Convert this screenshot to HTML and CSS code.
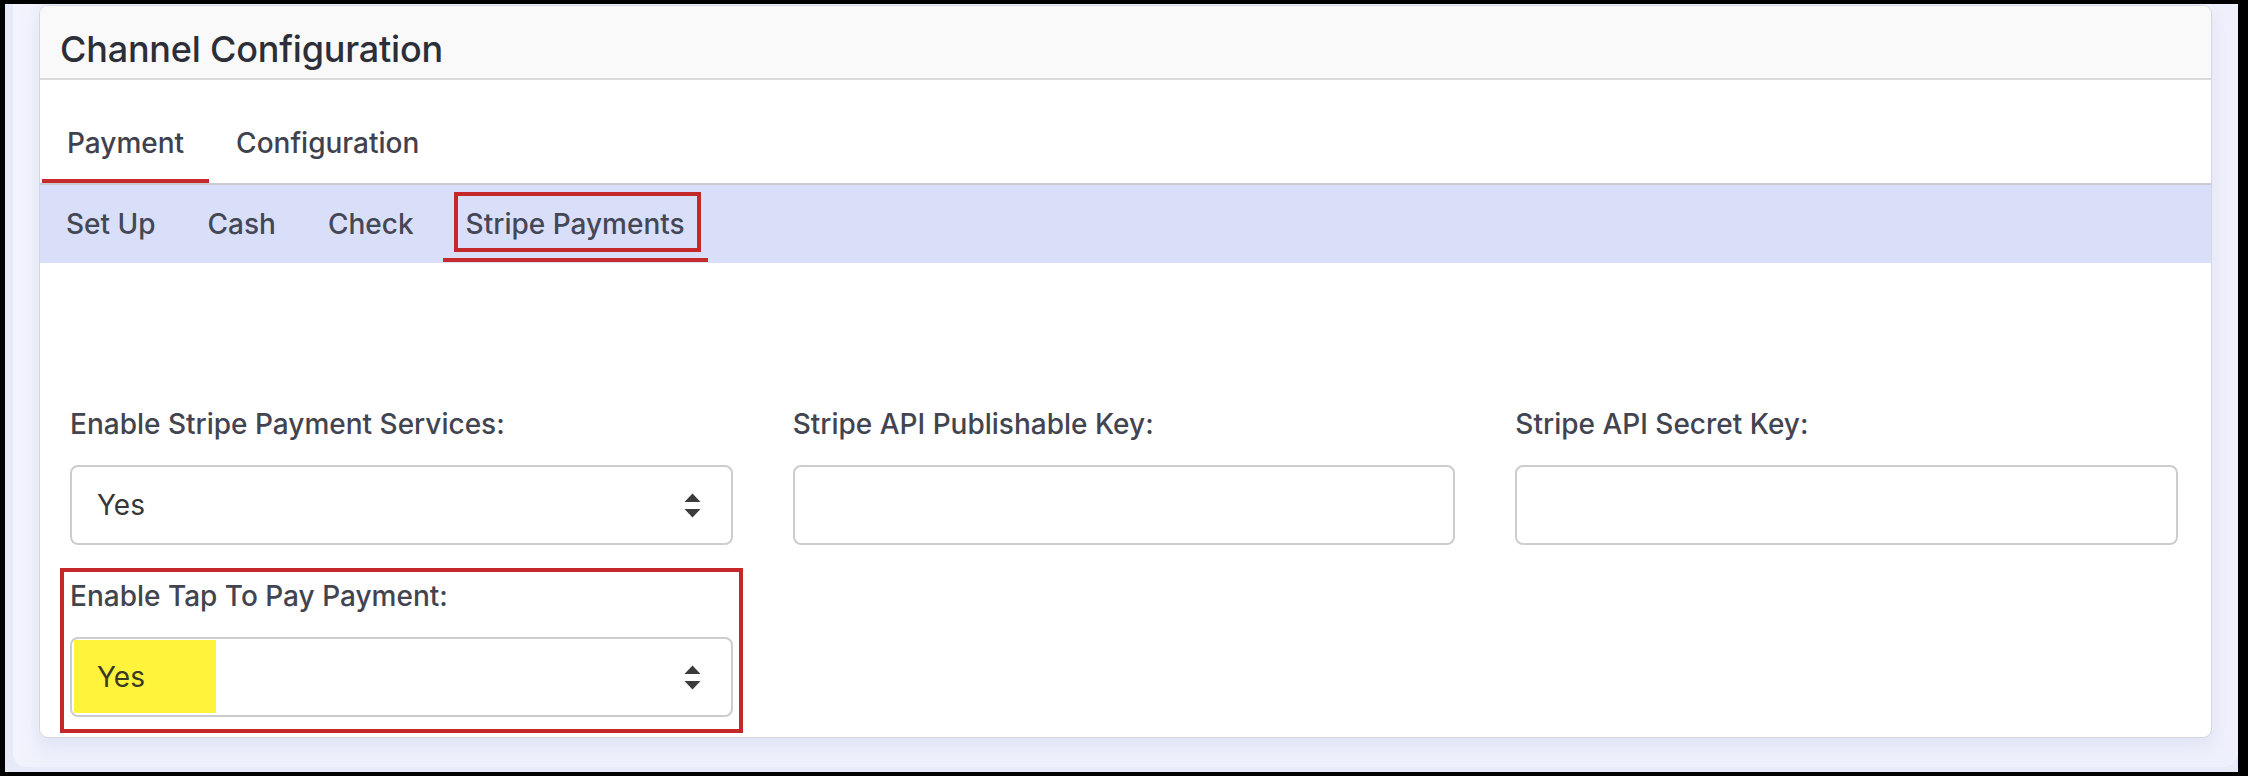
FILE: index.html
```html
<!DOCTYPE html>
<html lang="en">
<head>
<meta charset="utf-8">
<title>Channel Configuration</title>
<link rel="stylesheet" href="styles.css">
</head>
<body>
<div class="screen">
  <div class="page">
    <div class="panel">
      <section class="card">
        <header class="card-header">
          <h1 class="card-title">Channel Configuration</h1>
        </header>
        <nav class="tabs">
          <div class="tab active">Payment</div>
          <div class="tab">Configuration</div>
        </nav>
        <nav class="subtabs">
          <div class="subtab">Set Up</div>
          <div class="subtab">Cash</div>
          <div class="subtab">Check</div>
          <div class="subtab active annotated">Stripe Payments</div>
        </nav>
        <div class="card-body">
          <div class="form-grid">
            <div class="field">
              <label class="field-label">Enable Stripe Payment Services:</label>
              <div class="select">
                <span class="select-value">Yes</span>
                <svg class="select-arrows" width="17" height="25" viewBox="0 0 17 25"><path d="M0.5 9 L8.5 0.5 L16.5 9 Z" fill="#3b3b3b"/><path d="M0.5 16 L16.5 16 L8.5 24.5 Z" fill="#3b3b3b"/></svg>
              </div>
            </div>
            <div class="field">
              <label class="field-label">Stripe API Publishable Key:</label>
              <div class="input"></div>
            </div>
            <div class="field">
              <label class="field-label">Stripe API Secret Key:</label>
              <div class="input"></div>
            </div>
            <div class="field field-second annotated-group">
              <label class="field-label">Enable Tap To Pay Payment:</label>
              <div class="select select-flush">
                <span class="select-value highlight">Yes</span>
                <svg class="select-arrows" width="17" height="25" viewBox="0 0 17 25"><path d="M0.5 9 L8.5 0.5 L16.5 9 Z" fill="#3b3b3b"/><path d="M0.5 16 L16.5 16 L8.5 24.5 Z" fill="#3b3b3b"/></svg>
              </div>
            </div>
          </div>
        </div>
      </section>
    </div>
  </div>
</div>
</body>
</html>
```

FILE: styles.css
```css
html, body {
  margin: 0;
  padding: 0;
  background: #000;
  overflow: hidden;
}

.screen {
  box-sizing: border-box;
  width: 2248px;
  height: 776px;
  padding: 4px 10px 4px 5px;
  font-family: Inter, "Noto Sans", sans-serif;
}

.page {
  height: 100%;
  background: #e7eaf8;
  display: flex;
}

.panel {
  flex: 1;
  margin-left: 8px;
  margin-bottom: 5px;
  padding: 1px 26px 0 26px;
  background: linear-gradient(90deg, #f3f4fd 0px, #eef0fb 30px);
  border-radius: 0 0 14px 14px;
}

.card {
  background: #fff;
  border: 1px solid #d6d7df;
  border-radius: 9px;
  box-shadow: 0 8px 16px rgba(110, 120, 190, 0.10);
  overflow: hidden;
}

.card-header {
  height: 74px;
  box-sizing: border-box;
  padding: 21px 0 8px 20px;
  background: #f9f9f9;
  border-bottom: 2px solid #dbdbdb;
}

.card-title {
  margin: 0;
  font-size: 36px;
  line-height: 44px;
  font-weight: 500;
  color: #2c2e38;
  letter-spacing: -0.2px;
}

.tabs {
  display: flex;
  gap: 2px;
  padding: 46px 0 0 2px;
  border-bottom: 2px solid #c9cad4;
}

.tab {
  padding: 0 25px 19px 25px;
  border-bottom: 4px solid transparent;
  font-size: 28px;
  line-height: 34px;
  font-weight: 500;
  color: #3f424e;
}

.tab.active {
  border-bottom-color: #c52a2c;
}

.subtabs {
  display: flex;
  gap: 6px;
  padding: 0 0 1px 3px;
  background: #d9dff8;
}

.subtab {
  position: relative;
  padding: 22px 23px 17px 23px;
  border-bottom: 4px solid transparent;
  font-size: 28px;
  line-height: 34px;
  font-weight: 500;
  color: #444756;
}

.subtab.active {
  border-bottom-color: #c52a2c;
}

.annotated::after {
  content: "";
  position: absolute;
  top: 7px;
  bottom: 6px;
  left: 11px;
  right: 7px;
  border: 4px solid #c4282a;
}

.card-body {
  padding: 144px 33px 20px 30px;
}

.form-grid {
  display: grid;
  grid-template-columns: repeat(3, 1fr);
  column-gap: 60px;
  row-gap: 34px;
}

.field {
  display: flex;
  flex-direction: column;
  gap: 24px;
}

.field-second {
  grid-column: 1;
}

.annotated-group {
  position: relative;
}

.annotated-group::after {
  content: "";
  position: absolute;
  top: -11px;
  bottom: -16px;
  left: -10px;
  right: -10px;
  border: 4px solid #c4282a;
}

.field-label {
  font-size: 28px;
  line-height: 34px;
  font-weight: 500;
  color: #42444f;
}

.select,
.input {
  box-sizing: border-box;
  height: 80px;
  border: 2px solid #cdcdcf;
  border-radius: 8px;
  background: #fff;
}

.select {
  display: flex;
  align-items: center;
  padding: 0 30px 0 25px;
}

.select-flush {
  padding-left: 0;
}

.select-value {
  font-size: 28px;
  line-height: 34px;
  color: #363636;
}

.select-value.highlight {
  align-self: stretch;
  display: flex;
  align-items: center;
  box-sizing: border-box;
  width: 142px;
  margin: 1px 0 2px 2px;
  padding-left: 23px;
  background: #fff33c;
  color: #3a3a22;
}

.select-arrows {
  margin-left: auto;
  display: block;
}
```
